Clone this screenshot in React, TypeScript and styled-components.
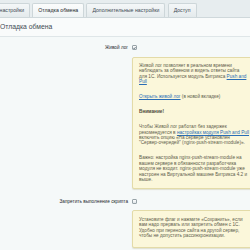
import React from 'react';
import styled, { createGlobalStyle } from 'styled-components';

const Global = createGlobalStyle`
  html, body { margin: 0; padding: 0; background: #f5f9f9; overflow: hidden; }
  body { font-family: "Liberation Sans", Arial, sans-serif; }
`;

const Page = styled.div`
  width: 250px;
  height: 250px;
  overflow: hidden;
  background: #f5f9f9;
`;

const TabBar = styled.div`
  display: flex;
  align-items: flex-end;
  gap: 2.2px;
  height: 17.5px;
  box-sizing: border-box;
  padding-top: 3px;
  margin-left: -32.5px;
  background: #e7edef;
  border-bottom: 1px solid #cfd8db;
`;

const Tab = styled.div<{ $active?: boolean }>`
  height: 14px;
  box-sizing: border-box;
  padding: 0 5px;
  display: flex;
  align-items: center;
  font-size: 5.2px;
  white-space: nowrap;
  color: ${p => (p.$active ? '#1e282e' : '#3f4b54')};
  background: ${p => (p.$active ? 'linear-gradient(#fbfcfc, #eef3f4)' : 'linear-gradient(#f4f7f8, #e4eaec)')};
  border: 1px solid #cdd6d9;
  border-bottom: none;
  border-radius: 2px 2px 0 0;
`;

const Title = styled.div`
  height: 18px;
  display: flex;
  align-items: center;
  font-size: 6.8px;
  color: #3f4b54;
  background: #f9fbfb;
  border-bottom: 1px solid #dfe6e8;
`;

const Row = styled.div<{ $mt: number }>`
  display: grid;
  grid-template-columns: 128px 130px;
  column-gap: 3.5px;
  align-items: center;
  margin-top: ${p => p.$mt}px;
`;

const Label = styled.div`
  height: 6px;
  text-align: right;
  font-size: 4.7px;
  line-height: 6px;
  color: #1e282e;
  white-space: nowrap;
`;

const Check = styled.span`
  display: flex;
  align-items: center;
  justify-content: center;
  width: 5px;
  height: 5px;
  box-sizing: border-box;
  border: 1px solid #97a3a8;
  border-radius: 1px;
  background: linear-gradient(#ffffff, #dde4e7);
  svg { display: block; }
`;

const Note = styled.div<{ $pb: number }>`
  box-sizing: border-box;
  width: 130px;
  padding: 5.6px 6px ${p => p.$pb}px 6.5px;
  background: #fbf7da;
  border: 1px solid #e3dba8;
  border-radius: 2px;
  box-shadow: 0 1px 1px rgba(160, 150, 90, 0.25);
  font-size: 4.7px;
  color: #5e5c4a;
`;

const Para = styled.div<{ $mt?: number }>`
  display: flex;
  flex-direction: column;
  margin-top: ${p => p.$mt ?? 0}px;
`;

const Line = styled.div`
  height: 5.4px;
  line-height: 5.4px;
  white-space: nowrap;
  overflow: visible;
`;

const Link = styled.a`
  color: #2a6db5;
  text-decoration: underline;
`;

const Strong = styled.b`
  font-weight: bold;
  color: #4e4c3c;
`;

export default function App() {
  return (
    <Page>
      <Global />
      <TabBar>
        <Tab>Основные настройки</Tab>
        <Tab $active>Отладка обмена</Tab>
        <Tab>Дополнительные настройки</Tab>
        <Tab>Доступ</Tab>
      </TabBar>
      <Title>Отладка обмена</Title>
      <Row $mt={8}>
        <Label>Живой лог</Label>
        <div>
          <Check>
            <svg width="4" height="4" viewBox="0 0 4 4">
              <path d="M0.5 2 L1.6 3.1 L3.5 0.8" fill="none" stroke="#3b4a55" strokeWidth="0.8" />
            </svg>
          </Check>
        </div>
      </Row>
      <Row $mt={6}>
        <div />
        <Note $pb={6}>
          <Para>
            <Line>Живой лог позволяет в реальном времени</Line>
            <Line>наблюдать за обменом и видеть ответы сайта</Line>
            <Line>для 1С. Используется модуль Битрикса <Link>Push and</Link></Line>
            <Line><Link>Pull</Link></Line>
          </Para>
          <Para $mt={9.6}>
            <Line><Link>Открыть живой лог</Link> (в новой вкладке)</Line>
          </Para>
          <Para $mt={9.6}>
            <Line><Strong>Внимание!</Strong></Line>
          </Para>
          <Para $mt={9.6}>
            <Line>Чтобы Живой лог работал без задержек</Line>
            <Line>рекомендуется в <Link>настройках модуля Push and Pull</Link></Line>
            <Line>включить опцию «На сервере установлен</Line>
            <Line>"Сервер-очередей" (nginx-push-stream-module)».</Line>
          </Para>
          <Para $mt={9.6}>
            <Line>Важно: настройка nginx-push-stream-module на</Line>
            <Line>вашем сервере в обязанности разработчика</Line>
            <Line>модуля не входит. nginx-push-stream-module уже</Line>
            <Line>настроен на Виртуальной машине Битрикса 4.2 и</Line>
            <Line>выше.</Line>
          </Para>
        </Note>
      </Row>
      <Row $mt={9.5}>
        <Label>Запретить выполнение скрипта</Label>
        <div>
          <Check />
        </div>
      </Row>
      <Row $mt={5.5}>
        <div />
        <Note $pb={9}>
          <Para>
            <Line>Установите флаг и нажмите «Сохранить», если</Line>
            <Line>вам надо прервать или запретить обмен с 1С.</Line>
            <Line>Удобно при переносе сайта на другой сервер,</Line>
            <Line>чтобы не допустить рассинхронизации.</Line>
          </Para>
        </Note>
      </Row>
    </Page>
  );
}
